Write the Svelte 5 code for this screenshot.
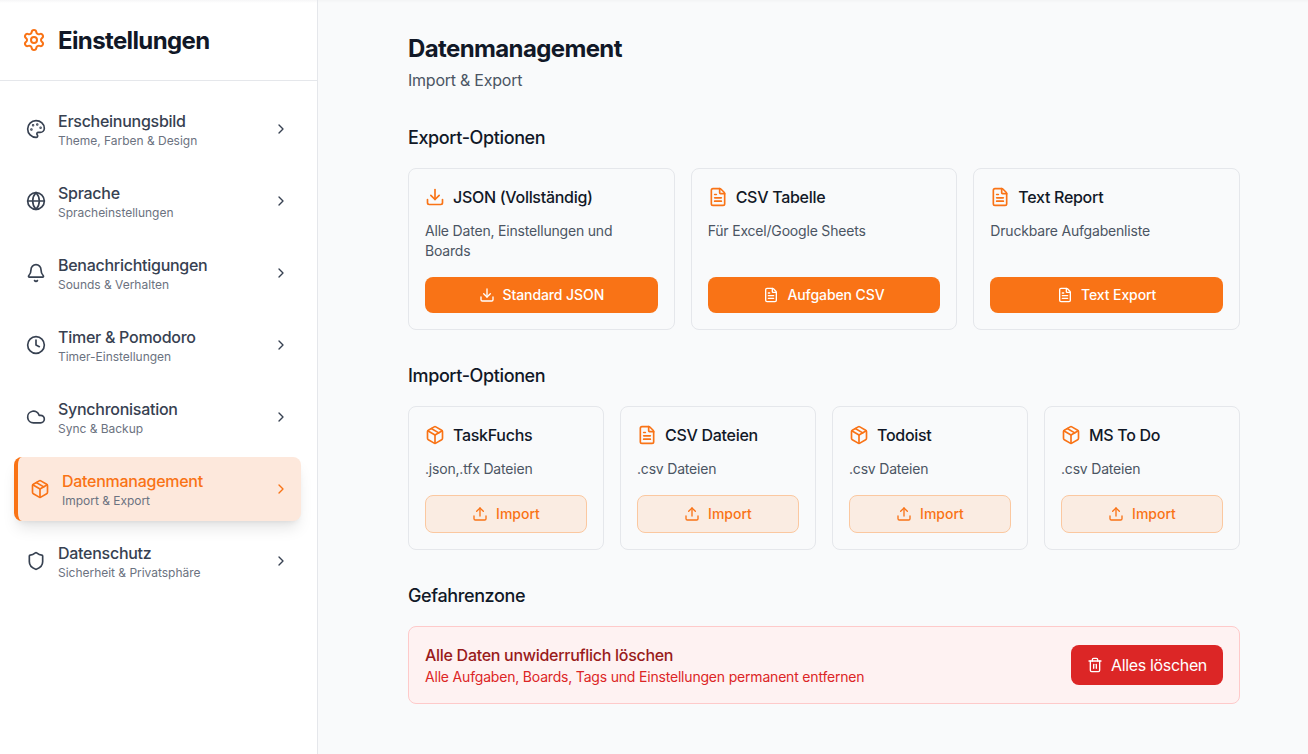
<script>
  const icons = {
    settings: '<path d="M9.671 4.136a2.34 2.34 0 0 1 4.659 0 2.34 2.34 0 0 0 3.319 1.915 2.34 2.34 0 0 1 2.33 4.033 2.34 2.34 0 0 0 0 3.831 2.34 2.34 0 0 1-2.33 4.033 2.34 2.34 0 0 0-3.319 1.915 2.34 2.34 0 0 1-4.659 0 2.34 2.34 0 0 0-3.32-1.915 2.34 2.34 0 0 1-2.33-4.033 2.34 2.34 0 0 0 0-3.831A2.34 2.34 0 0 1 6.35 6.051a2.34 2.34 0 0 0 3.319-1.915"/><circle cx="12" cy="12" r="3"/>',
    palette: '<path d="M12 22a1 1 0 0 1 0-20 10 9 0 0 1 10 9 5 5 0 0 1-5 5h-2.25a1.75 1.75 0 0 0-1.4 2.8l.3.4a1.75 1.75 0 0 1-1.4 2.8z"/><circle cx="13.5" cy="6.5" r=".5" fill="currentColor"/><circle cx="17.5" cy="10.5" r=".5" fill="currentColor"/><circle cx="6.5" cy="12.5" r=".5" fill="currentColor"/><circle cx="8.5" cy="7.5" r=".5" fill="currentColor"/>',
    globe: '<circle cx="12" cy="12" r="10"/><path d="M12 2a14.5 14.5 0 0 0 0 20 14.5 14.5 0 0 0 0-20"/><path d="M2 12h20"/>',
    bell: '<path d="M10.268 21a2 2 0 0 0 3.464 0"/><path d="M3.262 15.326A1 1 0 0 0 4 17h16a1 1 0 0 0 .74-1.673C19.41 13.956 18 12.499 18 8A6 6 0 0 0 6 8c0 4.499-1.411 5.956-2.738 7.326"/>',
    clock: '<circle cx="12" cy="12" r="10"/><path d="M12 6v6l4 2"/>',
    cloud: '<path d="M17.5 19H9a7 7 0 1 1 6.71-9h1.79a4.5 4.5 0 1 1 0 9Z"/>',
    box: '<path d="M11 21.73a2 2 0 0 0 2 0l7-4A2 2 0 0 0 21 16V8a2 2 0 0 0-1-1.73l-7-4a2 2 0 0 0-2 0l-7 4A2 2 0 0 0 3 8v8a2 2 0 0 0 1 1.73z"/><path d="M12 22V12"/><path d="M3.29 7 12 12l8.71-5"/><path d="m7.5 4.27 9 5.15"/>',
    shield: '<path d="M20 13c0 5-3.5 7.5-7.66 8.95a1 1 0 0 1-.67-.01C7.5 20.5 4 18 4 13V6a1 1 0 0 1 1-1c2 0 4.5-1.2 6.24-2.72a1.17 1.17 0 0 1 1.52 0C14.51 3.81 17 5 19 5a1 1 0 0 1 1 1z"/>',
    chevron: '<path d="m9 18 6-6-6-6"/>',
    download: '<path d="M12 15V3"/><path d="M21 15v4a2 2 0 0 1-2 2H5a2 2 0 0 1-2-2v-4"/><path d="m7 10 5 5 5-5"/>',
    upload: '<path d="M12 3v12"/><path d="m17 8-5-5-5 5"/><path d="M21 15v4a2 2 0 0 1-2 2H5a2 2 0 0 1-2-2v-4"/>',
    file: '<path d="M6 22a2 2 0 0 1-2-2V4a2 2 0 0 1 2-2h8a2.4 2.4 0 0 1 1.704.706l3.588 3.588A2.4 2.4 0 0 1 20 8v12a2 2 0 0 1-2 2z"/><path d="M14 2v5a1 1 0 0 0 1 1h5"/><path d="M10 9H8"/><path d="M16 13H8"/><path d="M16 17H8"/>',
    trash: '<path d="M10 11v6"/><path d="M14 11v6"/><path d="M19 6v14a2 2 0 0 1-2 2H7a2 2 0 0 1-2-2V6"/><path d="M3 6h18"/><path d="M8 6V4a2 2 0 0 1 2-2h4a2 2 0 0 1 2 2v2"/>'
  };

  const nav = [
    { icon: 'palette', title: 'Erscheinungsbild', sub: 'Theme, Farben & Design' },
    { icon: 'globe', title: 'Sprache', sub: 'Spracheinstellungen' },
    { icon: 'bell', title: 'Benachrichtigungen', sub: 'Sounds & Verhalten' },
    { icon: 'clock', title: 'Timer & Pomodoro', sub: 'Timer-Einstellungen' },
    { icon: 'cloud', title: 'Synchronisation', sub: 'Sync & Backup' },
    { icon: 'box', title: 'Datenmanagement', sub: 'Import & Export', active: true },
    { icon: 'shield', title: 'Datenschutz', sub: 'Sicherheit & Privatsphäre' }
  ];

  const exports = [
    { icon: 'download', title: 'JSON (Vollständig)', text: 'Alle Daten, Einstellungen und Boards', action: 'Standard JSON' },
    { icon: 'file', title: 'CSV Tabelle', text: 'Für Excel/Google Sheets', action: 'Aufgaben CSV' },
    { icon: 'file', title: 'Text Report', text: 'Druckbare Aufgabenliste', action: 'Text Export' }
  ];

  const imports = [
    { icon: 'box', title: 'TaskFuchs', text: '.json,.tfx Dateien' },
    { icon: 'file', title: 'CSV Dateien', text: '.csv Dateien' },
    { icon: 'box', title: 'Todoist', text: '.csv Dateien' },
    { icon: 'box', title: 'MS To Do', text: '.csv Dateien' }
  ];
</script>

{#snippet icon(name, size)}
  <svg width={size} height={size} viewBox="0 0 24 24" fill="none" stroke="currentColor" stroke-width="2" stroke-linecap="round" stroke-linejoin="round" aria-hidden="true">{@html icons[name]}</svg>
{/snippet}

<div class="app">
  <aside>
    <header>
      <span class="accent">{@render icon('settings', 24)}</span>
      <h1>Einstellungen</h1>
    </header>
    <nav>
      {#each nav as item}
        <button class="nav-item" class:active={item.active}>
          {@render icon(item.icon, 20)}
          <span class="label">
            <span class="title">{item.title}</span>
            <span class="sub">{item.sub}</span>
          </span>
          {@render icon('chevron', 16)}
        </button>
      {/each}
    </nav>
  </aside>

  <main>
    <h1>Datenmanagement</h1>
    <p class="lead">Import &amp; Export</p>

    <section>
      <h2>Export-Optionen</h2>
      <div class="grid three">
        {#each exports as card}
          <article>
            <h3><span class="accent">{@render icon(card.icon, 20)}</span>{card.title}</h3>
            <p>{card.text}</p>
            <button class="solid">{@render icon(card.icon, 16)}{card.action}</button>
          </article>
        {/each}
      </div>
    </section>

    <section>
      <h2>Import-Optionen</h2>
      <div class="grid four">
        {#each imports as card}
          <article>
            <h3><span class="accent">{@render icon(card.icon, 20)}</span>{card.title}</h3>
            <p>{card.text}</p>
            <button class="soft">{@render icon('upload', 16)}Import</button>
          </article>
        {/each}
      </div>
    </section>

    <section>
      <h2>Gefahrenzone</h2>
      <div class="danger">
        <div>
          <h3>Alle Daten unwiderruflich löschen</h3>
          <p>Alle Aufgaben, Boards, Tags und Einstellungen permanent entfernen</p>
        </div>
        <button class="delete">{@render icon('trash', 16)}Alles löschen</button>
      </div>
    </section>
  </main>
</div>

<style>
  :global(body) {
    margin: 0;
    overflow: hidden;
  }
  .app {
    display: flex;
    height: 754px;
    box-sizing: border-box;
    font-family: Inter, sans-serif;
    font-size: 16px;
    line-height: 24px;
    color: #111827;
    background: linear-gradient(#f3f4f5, #f9fafb 3px);
  }
  h1, h2, h3, p {
    margin: 0;
  }
  button {
    font: inherit;
    border: 0;
    margin: 0;
    cursor: pointer;
    box-sizing: border-box;
  }
  svg {
    display: block;
    flex: none;
  }
  .accent {
    color: #f97316;
  }
  h1 {
    font-size: 24px;
    line-height: 32px;
    font-weight: 700;
    letter-spacing: -0.62px;
  }
  aside {
    width: 318px;
    flex: none;
    box-sizing: border-box;
    background: linear-gradient(#f6f6f7, #fff 3px);
    border-right: 1px solid #e5e7eb;
  }
  header {
    display: flex;
    align-items: center;
    gap: 12px;
    height: 80px;
    padding: 0 22px;
    border-bottom: 1px solid #e5e7eb;
  }
  header h1 {
    padding-top: 2px;
  }
  nav {
    display: flex;
    flex-direction: column;
    gap: 8px;
    padding: 16px 16px 16px 14px;
  }
  .nav-item {
    display: flex;
    align-items: center;
    gap: 12px;
    height: 64px;
    padding: 12px;
    border-radius: 8px;
    background: transparent;
    color: #374151;
    text-align: left;
  }
  .nav-item.active {
    border-left: 4px solid #f97316;
    background: #fde8dc;
    color: #f97316;
    box-shadow: 0 10px 15px -3px rgba(0, 0, 0, 0.1), 0 4px 6px -4px rgba(0, 0, 0, 0.1);
  }
  .label {
    display: flex;
    flex-direction: column;
    flex: 1;
  }
  .title {
    font-weight: 500;
    letter-spacing: -0.27px;
  }
  .sub {
    font-size: 12px;
    line-height: 16px;
    letter-spacing: -0.02px;
    color: #6b7280;
  }
  main {
    width: 832px;
    padding: 33px 0 0 90px;
  }
  .lead {
    margin-top: 3px;
    color: #4b5563;
    letter-spacing: -0.24px;
  }
  section {
    margin-top: 32px;
  }
  h2 {
    margin-bottom: 16px;
    font-size: 18px;
    line-height: 28px;
    font-weight: 500;
    letter-spacing: -0.38px;
  }
  .grid {
    display: grid;
    gap: 16px;
  }
  .three {
    grid-template-columns: repeat(3, 1fr);
  }
  .four {
    grid-template-columns: repeat(4, 1fr);
  }
  article {
    display: flex;
    flex-direction: column;
    padding: 16px;
    border: 1px solid #e5e7eb;
    border-radius: 8px;
  }
  h3 {
    display: flex;
    align-items: center;
    gap: 8px;
    font-size: 16px;
    line-height: 24px;
    font-weight: 500;
    letter-spacing: -0.29px;
  }
  article p {
    flex: 1;
    margin: 12px 0 16px;
    font-size: 14px;
    line-height: 20px;
    letter-spacing: -0.19px;
    color: #4b5563;
  }
  article button {
    display: flex;
    align-items: center;
    justify-content: center;
    gap: 8px;
    border-radius: 8px;
    font-size: 14px;
    line-height: 20px;
    font-weight: 500;
    letter-spacing: -0.09px;
  }
  .solid {
    height: 36px;
    background: #f97316;
    color: #fff;
  }
  .soft {
    height: 38px;
    border: 1px solid #fbc8a0;
    background: #faece2;
    color: #f97316;
    letter-spacing: 0;
  }
  .danger {
    display: flex;
    align-items: center;
    justify-content: space-between;
    padding: 16px;
    border: 1px solid #fecaca;
    border-radius: 8px;
    background: #fef2f2;
  }
  .danger h3 {
    color: #991b1b;
  }
  .danger p {
    font-size: 14px;
    line-height: 20px;
    letter-spacing: -0.19px;
    color: #dc2626;
  }
  .delete {
    display: flex;
    align-items: center;
    gap: 8px;
    height: 40px;
    padding: 8px 16px;
    border-radius: 8px;
    background: #dc2626;
    color: #fff;
    letter-spacing: -0.34px;
  }
</style>
